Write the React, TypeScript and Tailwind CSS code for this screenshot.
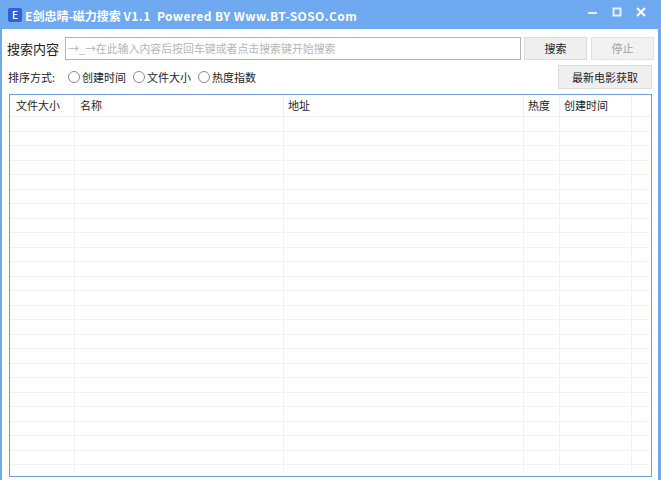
const font = { fontFamily: '"Noto Sans CJK SC", "Liberation Sans", sans-serif' }

const sortOptions = ['创建时间', '文件大小', '热度指数']

// column widths of the list, the last one is the scrollbar gap
const columns = [
  { title: '文件大小', width: 'w-[65px]', pad: 'pl-[6px]', line: 'border-r' },
  { title: '名称', width: 'w-[209px]', pad: 'pl-[5px]', line: 'border-r' },
  { title: '地址', width: 'w-[240px]', pad: 'pl-[4px]', line: 'border-r' },
  { title: '热度', width: 'w-[36px]', pad: 'pl-[4px]', line: 'border-r' },
  { title: '创建时间', width: 'w-[72px]', pad: 'pl-[4px]', line: 'border-r' },
  { title: '', width: 'w-[17px]', pad: '', line: '' },
]

const rows = Array.from({ length: 24 })

function Radio({ label }: { label: string }) {
  return (
    <label className="flex items-center gap-[2px]">
      <span className="w-[12px] h-[12px] rounded-full border border-[#8a8a8a] bg-white" />
      <span className="text-[11px] leading-none text-[#222]">{label}</span>
    </label>
  )
}

export default function App() {
  return (
    <div className="w-[661px] h-[480px] bg-[#6fa9f0] flex flex-col overflow-hidden" style={font}>
      <div className="h-[29px] pt-[2px] shrink-0 flex items-center pl-[8px] pr-[8px]">
        <div className="w-[14px] h-[14px] mb-[1px] bg-[#2f62d8] rounded-[2px] flex items-center justify-center text-white text-[10px] font-medium leading-none mr-[3px]">
          E
        </div>
        <span className="text-white text-[12px] font-bold whitespace-pre leading-none">
          E剑忠晴-磁力搜索 <span className="tracking-[0.4px]">V1.1  Powered BY Www.BT-SOSO.Com</span>
        </span>
        <div className="ml-auto mb-[7px] flex items-center gap-[14px] pr-[7px]">
          <svg width="10" height="10" viewBox="0 0 10 10"><rect x="0" y="5" width="9" height="2" fill="#e8f1fd" /></svg>
          <svg width="10" height="10" viewBox="0 0 10 10"><rect x="1.5" y="1.5" width="7" height="7" fill="none" stroke="#e8f1fd" strokeWidth="2" /></svg>
          <svg width="10" height="10" viewBox="0 0 10 10"><path d="M1 1L9 9M9 1L1 9" stroke="#ffffff" strokeWidth="2" /></svg>
        </div>
      </div>

      <div className="flex-1 ml-[2px] mr-[3px] bg-white flex flex-col min-h-0">
        <div className="flex items-center h-[22px] mt-[8px] pl-[5px]">
          <span className="text-[13px] leading-none text-[#222] w-[58px]">搜索内容</span>
          <div className="w-[456px] h-[23px] border border-[#b4b4b4] flex items-center pl-[2px] text-[10.9px] text-[#b5b5b5] leading-none">
            →_→在此输入内容后按回车键或者点击搜索键开始搜索
          </div>
          <button className="ml-[3px] w-[63px] h-[23px] bg-[#efefef] border border-[#dcdcdc] text-[11px] text-[#222]">搜索</button>
          <button className="ml-[4px] w-[63px] h-[23px] bg-[#f2f2f2] border border-[#e2e2e2] text-[11px] text-[#a0a0a0]">停止</button>
        </div>

        <div className="flex items-center h-[24px] mt-[6px] pl-[6px] pr-[6px]">
          <span className="text-[11px] leading-none text-[#222] w-[60px]">排序方式:</span>
          <div className="flex items-center gap-[7px]">
            {sortOptions.map(o => <Radio key={o} label={o} />)}
          </div>
          <button className="ml-auto w-[94px] h-[24px] bg-[#efefef] border border-[#dcdcdc] text-[11px] text-[#222]">最新电影获取</button>
        </div>

        <div className="mt-[5px] ml-[7px] mr-[6px] h-[383px] border border-[#6f9fd8] flex flex-col overflow-hidden">
          <div className="flex h-[22px] shrink-0 border-b border-[#f0f0f0]">
            {columns.map((c, i) => (
              <div key={i} className={`${c.width} ${c.pad} ${c.line} shrink-0 border-[#efefef] flex items-center text-[11px] text-[#222] leading-none`}>
                {c.title}
              </div>
            ))}
          </div>
          {rows.map((_, r) => (
            <div key={r} className="flex h-[14.5px] shrink-0 border-b border-[#f1f1f1] w-[639px]">
              {columns.map((c, i) => (
                <div key={i} className={`${c.width} ${c.line} shrink-0 border-[#f2f2f2]`} />
              ))}
            </div>
          ))}
          <div className="flex h-[7px] shrink-0">
            {columns.map((c, i) => (
              <div key={i} className={`${c.width} ${c.line} shrink-0 border-[#f2f2f2]`} />
            ))}
          </div>
        </div>
      </div>
    </div>
  )
}
